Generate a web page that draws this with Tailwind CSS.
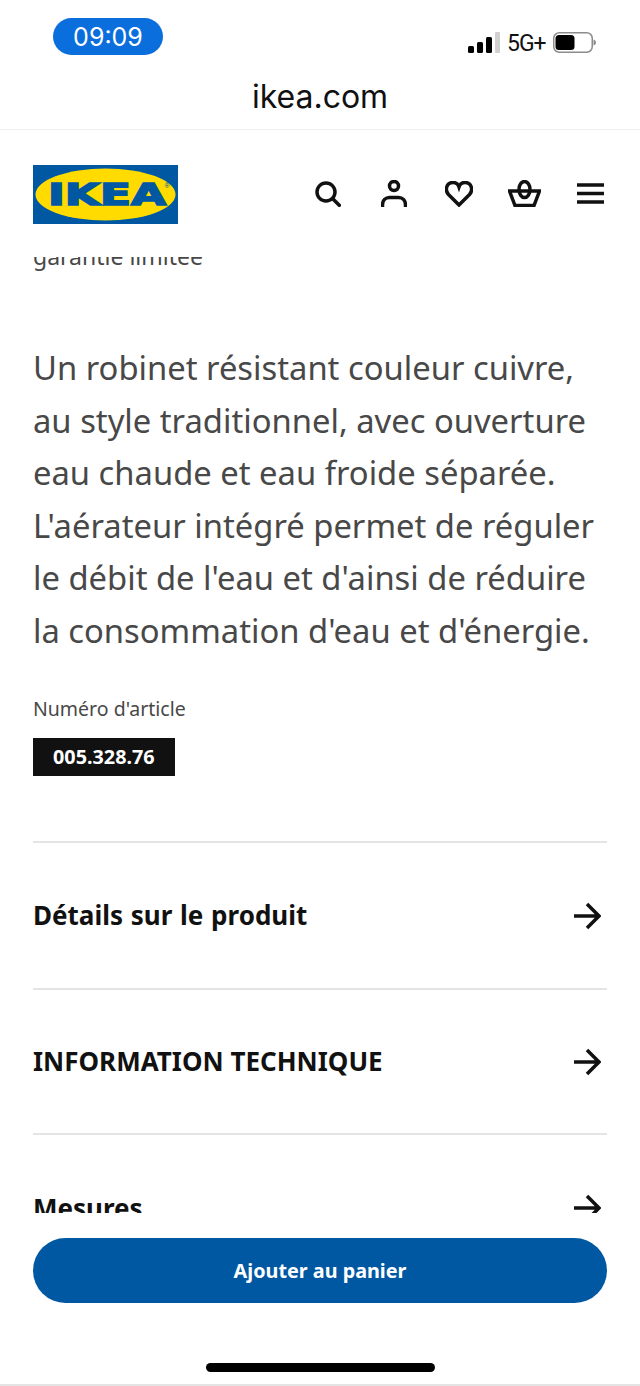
<!DOCTYPE html>
<html lang="fr">
<head>
  <meta charset="UTF-8">
  <meta name="viewport" content="width=device-width, initial-scale=1.0">
  <title>IKEA</title>
  <script src="https://cdn.jsdelivr.net/npm/@tailwindcss/browser@4"></script>
</head>
<body class="bg-white font-['Noto_Sans',sans-serif] text-[#111111]">
  <div class="flex flex-col h-[1386px] w-[640px] overflow-hidden">
    <!-- Status bar -->
    <div class="flex justify-between h-[76px] shrink-0 pl-[53px] pr-[43px]">
      <div class="mt-[18px] w-[110px] h-[37px] rounded-[19px] bg-[#0a6edc] text-white text-center font-['Inter',sans-serif] text-[25px] leading-[39px]">09:09</div>
      <div class="flex items-center h-[22px] mt-[32px]">
        <svg class="w-[32px] h-[22px]" viewBox="0 0 32 22">
          <rect x="0" y="14" width="6" height="7" rx="1.5" fill="#000"/>
          <rect x="9" y="10" width="6" height="11" rx="1.5" fill="#000"/>
          <rect x="18" y="5" width="6" height="16" rx="1.5" fill="#000"/>
          <rect x="27" y="0" width="5" height="21" rx="1" fill="#d0d0d0"/>
        </svg>
        <span class="ml-[7px] w-[46px] font-['Roboto',sans-serif] text-[23px] leading-[26px] mt-[2px] tracking-[-1px]">5G+</span>
        <svg class="w-[44px] h-[22px]" viewBox="0 0 44 22">
          <rect x="0.75" y="0.75" width="38.5" height="19.5" rx="5.500" fill="none" stroke="#8c8c8c" stroke-width="1.5"/>
          <rect x="2.500" y="3" width="19" height="15" rx="3.500" fill="#000"/>
          <path d="M40.500 7.500c1.500.5 2.500 1.500 2.500 3s-1 2.500-2.500 3z" fill="#8c8c8c"/>
        </svg>
      </div>
    </div>
    <!-- URL bar -->
    <div class="h-[54px] shrink-0 border-b border-[#eeeeee] text-center font-['Inter',sans-serif] text-[32px] leading-[42px] text-[#111]">ikea.com</div>
    <!-- Site header -->
    <header class="flex items-center justify-between h-[127px] shrink-0 pl-[33px] pr-[17px] bg-white">
      <svg class="w-[145px] h-[59px] mt-[1px]" viewBox="0 0 145 59">
        <rect width="145" height="59" fill="#0058a3"/>
        <ellipse cx="72.500" cy="29.500" rx="70" ry="26" fill="#ffdb00"/>
        <text x="74" y="40" text-anchor="middle" font-family="DejaVu Sans" font-weight="700" font-size="30" fill="#0058a3" stroke="#0058a3" stroke-width="1.600" textLength="118" lengthAdjust="spacingAndGlyphs">IKEA</text>
        <text x="134" y="23" text-anchor="middle" font-family="Liberation Sans" font-size="7" fill="#0058a3">®</text>
      </svg>
      <div class="flex items-center">
        <div class="flex justify-center w-[65.5px]">
          <svg class="w-[26px] h-[26px]" viewBox="0 0 26 26" fill="none" stroke="#111" stroke-width="3.500">
            <circle cx="11" cy="11" r="9"/>
            <path d="M17.500 17.500l8 8"/>
          </svg>
        </div>
        <div class="flex justify-center w-[65.5px]">
          <svg class="w-[26px] h-[27px]" viewBox="0 0 26 27" fill="none" stroke="#111" stroke-width="3.500">
            <circle cx="13" cy="6" r="4.500"/>
            <path d="M1.500 27v-2c0-4.500 3-7.500 7-7.500h9c4 0 7 3 7 7.500v2"/>
          </svg>
        </div>
        <div class="flex justify-center w-[65.5px]">
          <svg class="w-[28px] h-[26px]" viewBox="0 0 28 26" fill="none" stroke="#111" stroke-width="3.500">
            <path d="M14 24L3.500 13.500C-.5 9 1.500 1.500 8 1.500c3 0 5 1.500 6 4.500 1-3 3-4.500 6-4.500 6.500 0 8.500 7.500 4.500 12z"/>
          </svg>
        </div>
        <div class="flex justify-center w-[65.5px]">
          <svg class="w-[33px] h-[27px]" viewBox="0 0 33 27" fill="none" stroke="#111" stroke-width="3.500">
            <path d="M1.500 11h30l-5.500 14.500H7z"/>
            <ellipse cx="16.500" cy="9.500" rx="5.500" ry="8"/>
          </svg>
        </div>
        <div class="flex justify-center w-[65.5px]">
          <svg class="w-[27px] h-[21px]" viewBox="0 0 27 21" fill="none" stroke="#111" stroke-width="3.500">
            <path d="M0 2h27M0 10.500h27M0 19h27"/>
          </svg>
        </div>
      </div>
    </header>
    <!-- Scrolled content -->
    <main class="flex-1 overflow-hidden px-[33px]">
      <p class="mt-[-16px] text-[23px] leading-[30px] text-[#484848]">garantie limitée</p>
      <p class="mt-[71px] text-[32.75px] leading-[52.5px] text-[#484848]">Un robinet résistant couleur cuivre, au style traditionnel, avec ouverture eau chaude et eau froide séparée. L'aérateur intégré permet de réguler le débit de l'eau et d'ainsi de réduire la consommation d'eau et d'énergie.</p>
      <p class="mt-[39px] text-[19.5px] leading-[26px] text-[#484848]">Numéro d'article</p>
      <div class="mt-[16px] w-fit h-[38px] px-[20px] bg-[#111111] text-white font-bold text-[19.8px] leading-[38px]">005.328.76</div>
      <div class="mt-[65px] border-t-2 border-[#e4e4e4]">
        <div class="flex items-center justify-between h-[147px] border-b-2 border-[#e4e4e4] pr-[6px]">
          <span class="font-bold text-[26px] [word-spacing:1px]">Détails sur le produit</span>
          <svg class="w-[28px] h-[28px]" viewBox="0 0 28 28" fill="none" stroke="#111" stroke-width="3.500"><path d="M1 14h25M14 2l12 12-12 12"/></svg>
        </div>
        <div class="flex items-center justify-between h-[145px] border-b-2 border-[#e4e4e4] pr-[6px]">
          <span class="font-bold text-[26px]">INFORMATION TECHNIQUE</span>
          <svg class="w-[28px] h-[28px]" viewBox="0 0 28 28" fill="none" stroke="#111" stroke-width="3.500"><path d="M1 14h25M14 2l12 12-12 12"/></svg>
        </div>
        <div class="flex items-center justify-between h-[146px] pr-[6px]">
          <span class="font-bold text-[26px]">Mesures</span>
          <svg class="w-[28px] h-[28px]" viewBox="0 0 28 28" fill="none" stroke="#111" stroke-width="3.500"><path d="M1 14h25M14 2l12 12-12 12"/></svg>
        </div>
      </div>
    </main>
    <!-- Bottom action -->
    <div class="h-[173px] shrink-0 bg-white px-[33px] pt-[25px] border-b-2 border-[#e4e4e4] flex flex-col">
      <button class="w-full h-[65px] rounded-full bg-[#0058a3] text-white font-bold text-[19.8px]">Ajouter au panier</button>
      <div class="mt-[60px] mx-auto w-[229px] h-[9px] rounded-full bg-black"></div>
    </div>
  </div>
</body>
</html>
